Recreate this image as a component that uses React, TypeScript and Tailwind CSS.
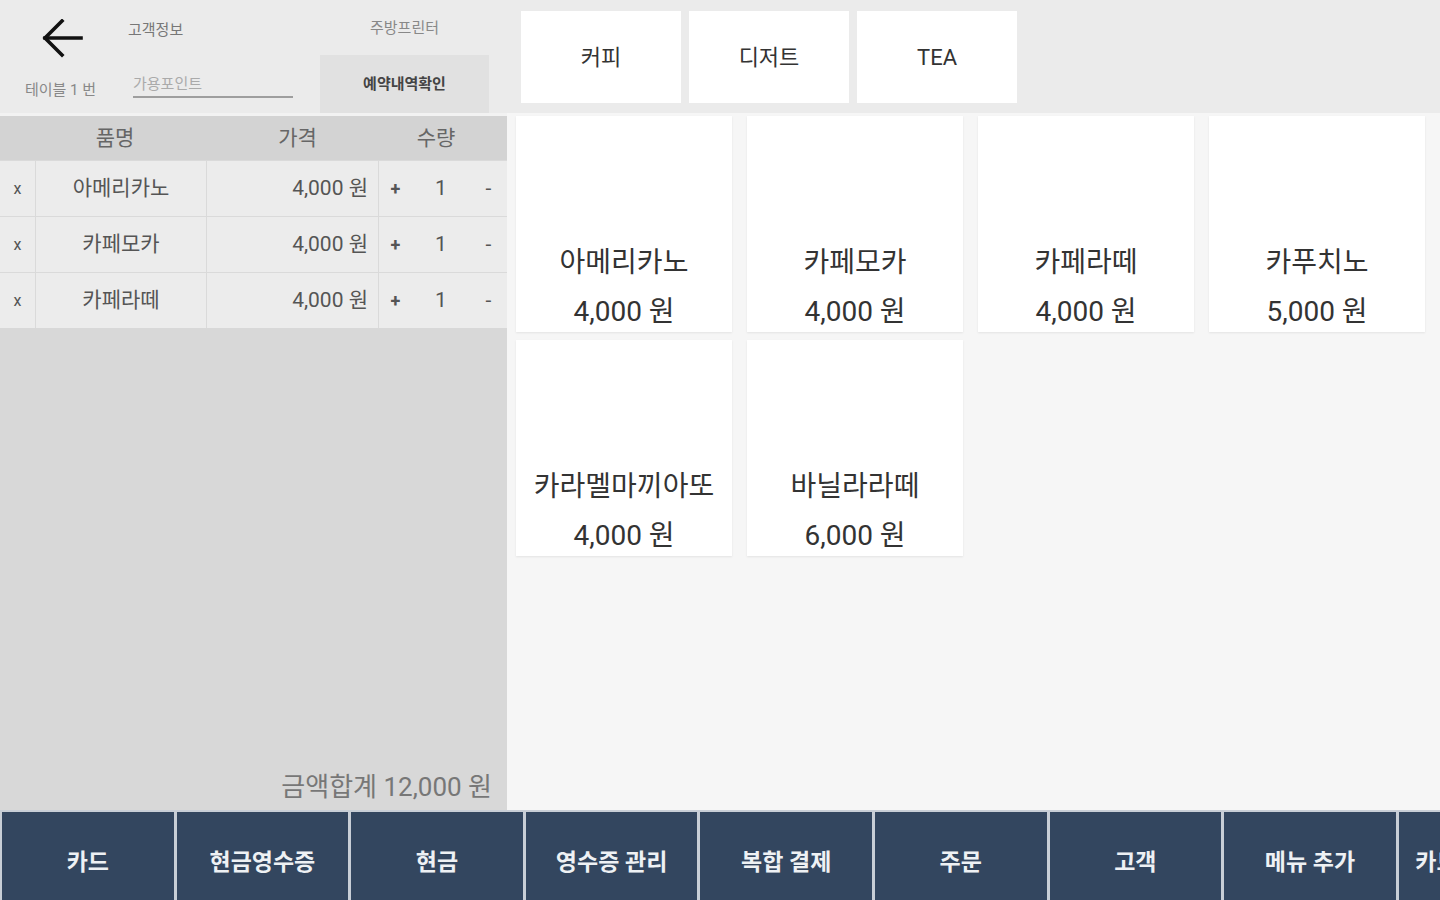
import React from 'react';

const orderItems = [
    { name: '아메리카노', price: '4,000 원', qty: 1 },
    { name: '카페모카', price: '4,000 원', qty: 1 },
    { name: '카페라떼', price: '4,000 원', qty: 1 },
];

const products = [
    { name: '아메리카노', price: '4,000 원' },
    { name: '카페모카', price: '4,000 원' },
    { name: '카페라떼', price: '4,000 원' },
    { name: '카푸치노', price: '5,000 원' },
    { name: '카라멜마끼아또', price: '4,000 원' },
    { name: '바닐라라떼', price: '6,000 원' },
];

const categories = ['커피', '디저트', 'TEA'];

const actions = ['카드', '현금영수증', '현금', '영수증 관리', '복합 결제', '주문', '고객', '메뉴 추가', '카드 승인 취소'];

function BackArrow() {
    return (
        <svg width="42" height="40" viewBox="0 0 42 40" fill="none" stroke="#111" strokeWidth="3.6" strokeLinecap="square">
            <path d="M3 19 H39" />
            <path d="M20 2 L3 19 L20 36" strokeLinejoin="miter" />
        </svg>
    );
}

export default function App() {
    return (
        <div className="w-[1440px] h-[900px] flex flex-col overflow-hidden bg-[#f6f6f6] font-['Roboto','Noto_Sans_CJK_KR',sans-serif]">
            {/* Top bar */}
            <div className="h-[113px] flex shrink-0 bg-[#ebebeb]">
                <div className="w-[507px] flex shrink-0">
                    <div className="w-[128px] flex flex-col pt-[19px]">
                        <div className="ml-[42px]">
                            <BackArrow />
                        </div>
                        <div className="mt-[21px] ml-[25px] text-[15px] leading-5 text-[#888]">테이블 1 번</div>
                    </div>
                    <div className="w-[160px] flex flex-col pt-[20px] ml-[5px]">
                        <div className="text-[15px] leading-5 text-[#777] ml-[-5px]">고객정보</div>
                        <div className="mt-[33px] h-[25px] border-b-2 border-[#9e9e9e] text-[15px] leading-5 text-[#aaa] pt-[1px]">가용포인트</div>
                    </div>
                    <div className="w-[169px] ml-[27px] flex flex-col">
                        <div className="h-[55px] flex items-center justify-center text-[15px] text-[#888] pt-[2px]">주방프린터</div>
                        <div className="flex-1 bg-[#e1e1e1] flex items-center justify-center text-[15px] font-bold text-[#444]">예약내역확인</div>
                    </div>
                </div>
                <div className="flex-1 flex gap-[8px] pl-[14px] pt-[11px]">
                    {categories.map((c) => (
                        <div key={c} className="w-[160px] h-[92px] bg-white flex items-center justify-center text-[22px] text-[#333]">
                            {c}
                        </div>
                    ))}
                </div>
            </div>

            {/* Middle */}
            <div className="h-[697px] flex shrink-0">
                {/* Order list */}
                <div className="w-[507px] shrink-0 flex flex-col bg-[#d8d8d8]">
                    <div className="h-[3px] bg-[#f2f2f2]" />
                    <div className="h-[44px] flex items-center bg-[#d3d3d3] text-[21px] text-[#666] pt-[2px]">
                        <div className="w-[230px] text-center">품명</div>
                        <div className="w-[135px] text-center">가격</div>
                        <div className="flex-1 text-center">수량</div>
                    </div>
                    {orderItems.map((item) => (
                        <div key={item.name} className="h-[56px] flex bg-[#ececec] border-t border-[#dadada] text-[21px] text-[#555]">
                            <div className="w-[36px] flex items-center justify-center border-r border-[#dadada] text-[16px]">x</div>
                            <div className="w-[171px] flex items-center justify-center border-r border-[#dadada]">{item.name}</div>
                            <div className="w-[172px] flex items-center justify-end pr-[10px] border-r border-[#dadada]">{item.price}</div>
                            <div className="w-[33px] flex items-center justify-center font-bold text-[18px]">+</div>
                            <div className="w-[58px] flex items-center justify-center">{item.qty}</div>
                            <div className="flex-1 flex items-center justify-center">-</div>
                        </div>
                    ))}
                    <div className="flex-1" />
                    <div className="h-[34px] mb-[6px] pr-[15px] flex items-center justify-end text-[26px] text-[#777]">금액합계 12,000 원</div>
                </div>

                {/* Products */}
                <div className="flex-1 bg-[#f6f6f6] pl-[9px] pt-[3px]">
                    <div className="grid grid-cols-[repeat(4,216px)] gap-x-[15px] gap-y-[8px]">
                        {products.map((p) => (
                            <div key={p.name} className="h-[216px] bg-white shadow-[0_1px_2px_rgba(0,0,0,0.08)] flex flex-col items-center justify-end pb-[2px] text-[28px] text-[#333]">
                                <div className="leading-[36px]">{p.name}</div>
                                <div className="leading-[36px] mt-[13px]">{p.price}</div>
                            </div>
                        ))}
                    </div>
                </div>
            </div>

            {/* Bottom actions */}
            <div className="h-[90px] shrink-0 flex gap-[3px] pl-[2px] pt-[2px] bg-[#c8ced6] overflow-hidden">
                {actions.map((a) => (
                    <div key={a} className="w-[171.6px] shrink-0 bg-[#33465f] flex items-center justify-center pt-[14px] text-[23px] font-bold text-[#eef1f4] whitespace-nowrap">
                        {a}
                    </div>
                ))}
            </div>
        </div>
    );
}
